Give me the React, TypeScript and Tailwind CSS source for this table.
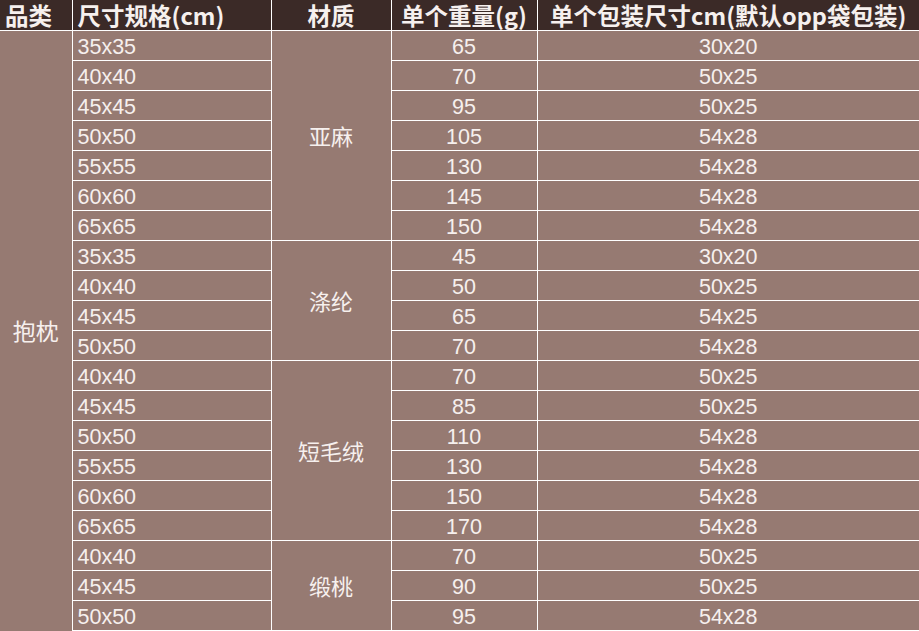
type Row = { size: string; weight: string; pack: string }
type Group = { material: string; rows: Row[] }

const groups: Group[] = [
  {
    material: '亚麻',
    rows: [
      { size: '35x35', weight: '65', pack: '30x20' },
      { size: '40x40', weight: '70', pack: '50x25' },
      { size: '45x45', weight: '95', pack: '50x25' },
      { size: '50x50', weight: '105', pack: '54x28' },
      { size: '55x55', weight: '130', pack: '54x28' },
      { size: '60x60', weight: '145', pack: '54x28' },
      { size: '65x65', weight: '150', pack: '54x28' },
    ],
  },
  {
    material: '涤纶',
    rows: [
      { size: '35x35', weight: '45', pack: '30x20' },
      { size: '40x40', weight: '50', pack: '50x25' },
      { size: '45x45', weight: '65', pack: '54x25' },
      { size: '50x50', weight: '70', pack: '54x28' },
    ],
  },
  {
    material: '短毛绒',
    rows: [
      { size: '40x40', weight: '70', pack: '50x25' },
      { size: '45x45', weight: '85', pack: '50x25' },
      { size: '50x50', weight: '110', pack: '54x28' },
      { size: '55x55', weight: '130', pack: '54x28' },
      { size: '60x60', weight: '150', pack: '54x28' },
      { size: '65x65', weight: '170', pack: '54x28' },
    ],
  },
  {
    material: '缎桃',
    rows: [
      { size: '40x40', weight: '70', pack: '50x25' },
      { size: '45x45', weight: '90', pack: '50x25' },
      { size: '50x50', weight: '95', pack: '54x28' },
    ],
  },
]

const total = groups.reduce((n, g) => n + g.rows.length, 0)

const cjk = "font-['Noto_Sans_CJK_SC',sans-serif]"
const num = "font-['Liberation_Sans',Arial,sans-serif] text-[21.5px] leading-[24px]"

export default function App() {
  return (
    <div className="w-[919px] h-[631px] overflow-hidden bg-[#967a72]">
      <table className="w-[919px] table-fixed border-collapse text-[#f6f0ee]">
        <colgroup>
          <col className="w-[72px]" />
          <col className="w-[199px]" />
          <col className="w-[120px]" />
          <col className="w-[146px]" />
          <col className="w-[382px]" />
        </colgroup>
        <thead>
          <tr className={`h-[30px] bg-[#3b2a27] ${cjk} text-[23.5px] font-bold leading-[28px]`}>
            <th className="border-b border-r border-white p-0 pt-[1px] px-[5px] text-left whitespace-nowrap">品类</th>
            <th className="border border-t-0 border-white p-0 pt-[1px] px-[5px] text-left whitespace-nowrap">尺寸规格(cm)</th>
            <th className="border border-t-0 border-white p-0 pt-[1px] text-center whitespace-nowrap">材质</th>
            <th className="border border-t-0 border-white p-0 pt-[1px] text-center whitespace-nowrap">单个重量(g)</th>
            <th className="border-b border-l border-white p-0 pt-[1px] text-center whitespace-nowrap">单个包装尺寸cm(默认opp袋包装)</th>
          </tr>
        </thead>
        <tbody>
          {groups.map((g, gi) =>
            g.rows.map((r, ri) => (
              <tr key={`${gi}-${ri}`} className="h-[30px]">
                {gi === 0 && ri === 0 && (
                  <td rowSpan={total} className={`border-r border-white p-0 text-center ${cjk} text-[23px] leading-none`}>
                    抱枕
                  </td>
                )}
                <td className={`border border-white p-0 pl-[5px] pt-[4px] ${num}`}>{r.size}</td>
                {ri === 0 && (
                  <td rowSpan={g.rows.length} className={`border border-white p-0 text-center ${cjk} text-[22px] leading-none`}>
                    {g.material}
                  </td>
                )}
                <td className={`border border-white p-0 pt-[4px] text-center ${num}`}>{r.weight}</td>
                <td className={`border-y border-l border-white p-0 pt-[4px] text-center ${num}`}>{r.pack}</td>
              </tr>
            )),
          )}
        </tbody>
      </table>
    </div>
  )
}
